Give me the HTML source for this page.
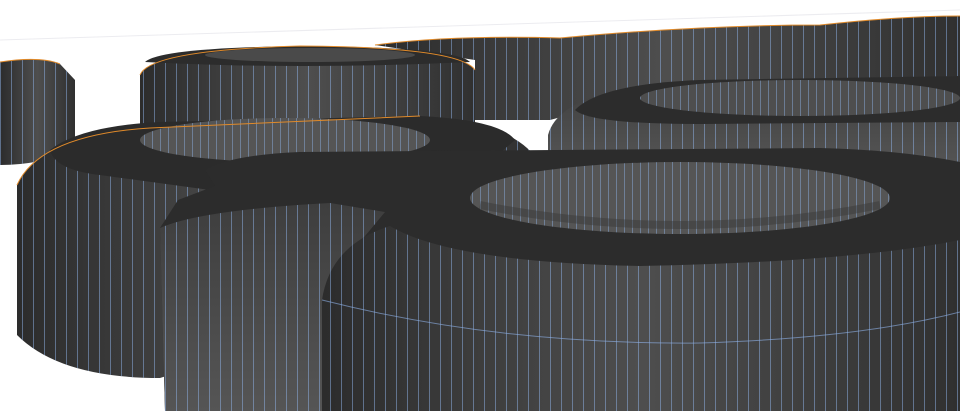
<!DOCTYPE html>
<html><head><meta charset="utf-8"><style>
html,body{margin:0;padding:0;background:#fff;width:960px;height:411px;overflow:hidden}
svg{display:block}
</style></head><body>
<svg width="960" height="411" viewBox="0 0 960 411" xmlns="http://www.w3.org/2000/svg">
<defs>
<pattern id="ln" width="11" height="10" patternUnits="userSpaceOnUse">
<rect x="0" y="0" width="1" height="10" fill="#8fb3ea" opacity="0.5"/>
</pattern>
<pattern id="ln2" width="8" height="10" patternUnits="userSpaceOnUse">
<rect x="0" y="0" width="1" height="10" fill="#8fb3ea" opacity="0.45"/>
</pattern>
<linearGradient id="side" x1="0" x2="1" y1="0" y2="0">
<stop offset="0" stop-color="#2c2c2c"/><stop offset="0.5" stop-color="#4e4e4e"/><stop offset="1" stop-color="#303030"/>
</linearGradient>
<linearGradient id="sideV" x1="0" x2="0" y1="0" y2="1">
<stop offset="0" stop-color="#3e3e3e"/><stop offset="1" stop-color="#555"/>
</linearGradient>
</defs>
<line x1="0" y1="40" x2="960" y2="10" stroke="#ececf0" stroke-width="1"/>

<path d="M375,45 Q450,35 560,38 Q700,25 820,25 Q900,16 960,16 L960,85 L680,85 L550,120 L475,120 L475,60 Z" fill="url(#side)"/>
<path d="M375,45 Q450,35 560,38 Q700,25 820,25 Q900,16 960,16 L960,85 L680,85 L550,120 L475,120 L475,60 Z" fill="url(#ln)"/>
<path d="M375,45 Q450,35 560,38 Q700,25 820,25 Q900,16 960,16" fill="none" stroke="#e08a2a" stroke-width="1"/>

<path d="M0,62 Q40,56 60,64 L75,80 L75,150 Q40,165 0,165 Z" fill="url(#side)"/>
<path d="M0,62 Q40,56 60,64 L75,80 L75,150 Q40,165 0,165 Z" fill="url(#ln)"/>
<path d="M0,62 Q40,56 60,64" fill="none" stroke="#e08a2a"/>

<path d="M140,75 Q150,50 300,46 Q460,47 475,70 L475,122 L140,127 Z" fill="url(#side)"/>
<path d="M140,75 Q150,50 300,46 Q460,47 475,70 L475,122 L140,127 Z" fill="url(#ln)"/>
<path d="M145,62 Q160,48 300,46 Q455,47 470,62 Q300,70 145,62 Z" fill="#2c2c2c"/>
<ellipse cx="310" cy="55" rx="105" ry="7" fill="#4a4a4a"/>
<path d="M140,75 Q150,50 300,46 Q460,47 475,70" fill="none" stroke="#e08a2a"/>

<path d="M548,135 Q560,90 680,82 L960,76 L960,165 L548,168 Z" fill="url(#sideV)"/>
<path d="M548,135 Q560,90 680,82 L960,76 L960,165 L548,168 Z" fill="url(#ln)"/>
<path d="M575,110 Q600,84 700,80 L960,76 L960,122 L700,124 Q590,124 575,110 Z" fill="#2c2c2c"/>
<ellipse cx="800" cy="98" rx="160" ry="18" fill="#4e4e4e"/>
<ellipse cx="800" cy="98" rx="160" ry="18" fill="url(#ln2)"/>

<path d="M17,185 Q40,135 150,128 L420,116 Q520,123 540,165 L540,260 L160,378 Q60,378 17,335 Z" fill="url(#side)"/>
<path d="M17,185 Q40,135 150,128 L420,116 Q520,123 540,165 L540,260 L160,378 Q60,378 17,335 Z" fill="url(#ln)"/>
<path d="M50,150 Q80,126 160,122 L420,116 Q500,120 515,140 L480,170 L210,190 L100,175 Q55,170 50,150 Z" fill="#2b2b2b"/>
<ellipse cx="285" cy="140" rx="145" ry="22" fill="#555"/>
<ellipse cx="285" cy="140" rx="145" ry="22" fill="url(#ln2)"/>
<path d="M17,185 Q40,135 150,128 L420,116" fill="none" stroke="#e08a2a"/>

<path d="M160,228 L178,200 L215,186 L205,170 Q230,155 300,152 L820,148 Q900,150 960,162 L960,411 L165,411 Z" fill="#2c2c2c"/>
<path d="M160,228 Q200,210 330,203 L385,212 L345,260 L335,411 L165,411 Z" fill="url(#sideV)"/>
<path d="M160,228 Q200,210 330,203 L385,212 L345,260 L335,411 L165,411 Z" fill="url(#ln)"/>
<path d="M322,300 Q330,245 390,226 Q450,262 640,266 Q850,262 960,240 L960,411 L322,411 Z" fill="url(#side)"/>
<path d="M322,300 Q330,245 390,226 Q450,262 640,266 Q850,262 960,240 L960,411 L322,411 Z" fill="url(#ln)"/>
<path d="M322,300 Q500,345 700,343 Q860,338 960,312" fill="none" stroke="#8fb3ea" stroke-width="1" opacity="0.6"/>
<ellipse cx="680" cy="198" rx="210" ry="36" fill="#555"/>
<ellipse cx="680" cy="198" rx="210" ry="36" fill="url(#ln2)"/>
<path d="M480,205 Q680,245 880,205" fill="none" stroke="#3a3a3a" stroke-width="8" opacity="0.5"/>
</svg>
</body></html>
